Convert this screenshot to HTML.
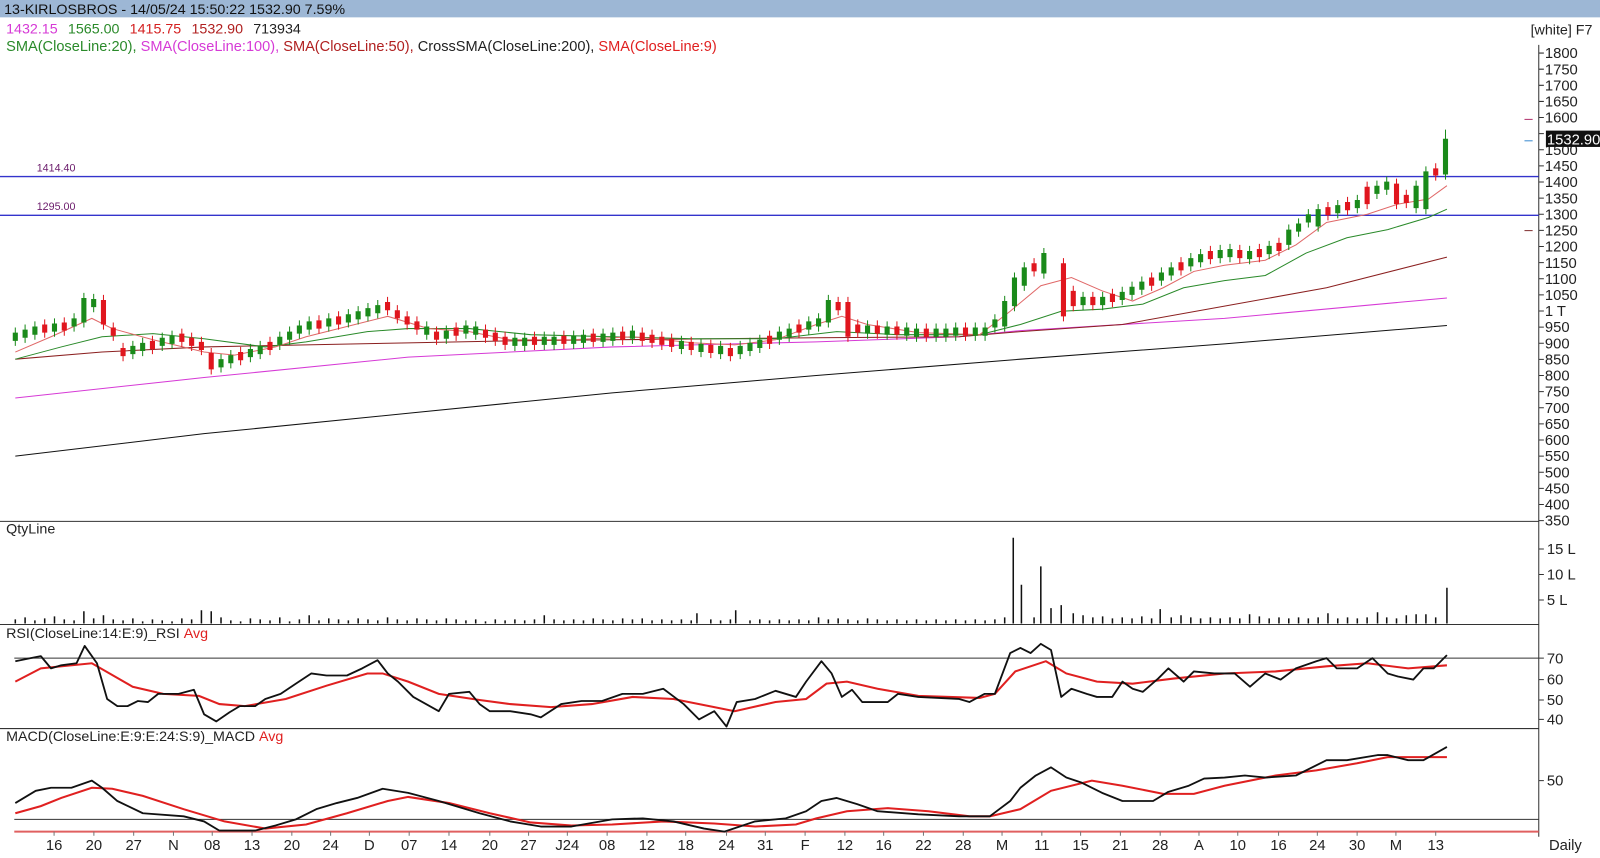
<!DOCTYPE html>
<html><head><meta charset="utf-8"><style>
html,body{margin:0;padding:0;background:#fff;width:1600px;height:858px;overflow:hidden}
svg{display:block;font-family:"Liberation Sans",Tahoma,sans-serif}
</style></head><body>
<svg width="1600" height="858" viewBox="0 0 1600 858" xmlns="http://www.w3.org/2000/svg">
<g transform="scale(1.0204)">
<rect x="0" y="0" width="1600" height="17" fill="#9db7d5"/>
<text x="4" y="13.5" font-size="14" fill="#111">13-KIRLOSBROS - 14/05/24 15:50:22 1532.90 7.59%</text>
<text x="6" y="33" font-size="14"><tspan fill="#d63ad6">1432.15</tspan><tspan fill="#2a8a2a" dx="10">1565.00</tspan><tspan fill="#d42020" dx="10">1415.75</tspan><tspan fill="#b02020" dx="10">1532.90</tspan><tspan fill="#222" dx="10">713934</tspan></text>
<text x="6" y="50" font-size="14.3"><tspan fill="#2a8a2a">SMA(CloseLine:20), </tspan><tspan fill="#d63ad6">SMA(CloseLine:100), </tspan><tspan fill="#b02020">SMA(CloseLine:50), </tspan><tspan fill="#222">CrossSMA(CloseLine:200), </tspan><tspan fill="#e02020">SMA(CloseLine:9)</tspan></text>
<text x="1500" y="34" font-size="14" fill="#222">[white] F7</text>

<line x1="1508" y1="44" x2="1508" y2="820" stroke="#333"/>
<g stroke="#333">
<path d="M1508,52h5M1508,67.8h5M1508,83.6h5M1508,99.4h5M1508,115.2h5M1508,131h5M1508,146.8h5M1508,162.6h5M1508,178.4h5M1508,194.2h5M1508,210h5M1508,225.8h5M1508,241.6h5M1508,257.4h5M1508,273.2h5M1508,289h5M1508,304.8h5M1508,320.6h5M1508,336.4h5M1508,352.2h5M1508,368h5M1508,383.8h5M1508,399.6h5M1508,415.4h5M1508,431.2h5M1508,447h5M1508,462.8h5M1508,478.6h5M1508,494.4h5M1508,510.2h5"/>
</g>
<g font-size="14.5" fill="#222">
<text x="1514" y="57">1800</text><text x="1514" y="72.8">1750</text><text x="1514" y="88.6">1700</text><text x="1514" y="104.4">1650</text><text x="1514" y="120.2">1600</text><text x="1514" y="151.8">1500</text><text x="1514" y="167.6">1450</text><text x="1514" y="183.4">1400</text><text x="1514" y="199.2">1350</text><text x="1514" y="215">1300</text><text x="1514" y="230.8">1250</text><text x="1514" y="246.6">1200</text><text x="1514" y="262.4">1150</text><text x="1514" y="278.2">1100</text><text x="1514" y="294">1050</text><text x="1514" y="309.8">1 T</text><text x="1514" y="325.6">950</text><text x="1514" y="341.4">900</text><text x="1514" y="357.2">850</text><text x="1514" y="373">800</text><text x="1514" y="388.8">750</text><text x="1514" y="404.6">700</text><text x="1514" y="420.4">650</text><text x="1514" y="436.2">600</text><text x="1514" y="452">550</text><text x="1514" y="467.8">500</text><text x="1514" y="483.6">450</text><text x="1514" y="499.4">400</text><text x="1514" y="515.2">350</text>
</g>
<rect x="1515" y="128" width="85" height="16" fill="#111"/>
<text x="1516" y="141.5" font-size="14.5" fill="#fff">1532.90</text>
<line x1="1494" y1="117" x2="1502" y2="117" stroke="#b0306a"/>
<line x1="1494" y1="138" x2="1502" y2="138" stroke="#3a8ad0"/>
<line x1="1494" y1="226" x2="1502" y2="226" stroke="#803030"/>

<g stroke="#333">
<line x1="0" y1="511" x2="1508" y2="511"/>
<line x1="0" y1="612" x2="1508" y2="612"/>
<line x1="0" y1="714" x2="1508" y2="714"/>
<line x1="14" y1="645" x2="1508" y2="645"/>
<line x1="14" y1="803" x2="1508" y2="803"/>
<path d="M1508,538h5M1508,563h5M1508,588h5M1508,645h5M1508,666h5M1508,686h5M1508,705h5M1508,765h5"/>
</g>
<line x1="14" y1="815" x2="1508" y2="815" stroke="#e06060" stroke-width="2"/>
<g font-size="14" fill="#222">
<text x="6" y="523">QtyLine</text>
<text x="6" y="625">RSI(CloseLine:14:E:9)_RSI <tspan fill="#e02020">Avg</tspan></text>
<text x="6" y="726">MACD(CloseLine:E:9:E:24:S:9)_MACD <tspan fill="#e02020">Avg</tspan></text>
</g>
<g font-size="14.5" fill="#222">
<text x="1516" y="543">15 L</text><text x="1516" y="568">10 L</text><text x="1516" y="593">5 L</text>
<text x="1516" y="650">70</text><text x="1516" y="671">60</text><text x="1516" y="691">50</text><text x="1516" y="710">40</text>
<text x="1516" y="770">50</text>
</g>

<line x1="0" y1="173" x2="1508" y2="173" stroke="#3333cc" stroke-width="1.3"/>
<line x1="0" y1="211" x2="1508" y2="211" stroke="#3333cc" stroke-width="1.3"/>
<text x="36" y="168" font-size="10.5" fill="#6a1a6a">1414.40</text>
<text x="36" y="206" font-size="10.5" fill="#6a1a6a">1295.00</text>

<polyline fill="none" stroke="#111" points="15,447 200,425 400,405 600,385 800,368 1000,352 1200,337 1418,319"/>
<polyline fill="none" stroke="#d63ad6" points="15,390 200,370 400,350 600,340 800,335 940,330 1000,324 1200,312 1418,292"/>
<polyline fill="none" stroke="#8b2020" points="15,352 100,345 200,340 300,338 400,336 500,334 600,333 700,332 800,331 940,330 1000,325 1100,318 1200,300 1300,282 1418,252"/>
<polyline fill="none" stroke="#2a8a2a" points="15,352 60,340 100,330 150,327 200,332 260,340 300,335 360,325 400,322 460,322 520,328 600,330 680,332 760,332 820,325 880,328 960,328 1000,318 1040,305 1080,303 1120,298 1160,282 1200,275 1240,270 1280,248 1320,233 1360,225 1400,213 1418,205"/>
<polyline fill="none" stroke="#e06868" points="15,345 50,330 90,312 110,322 150,333 200,345 230,348 270,340 300,330 340,320 380,310 420,322 460,325 500,333 560,333 620,330 680,336 720,338 760,333 800,318 825,310 850,318 900,326 960,328 990,305 1020,280 1050,272 1080,285 1110,295 1140,282 1170,266 1200,260 1240,255 1270,240 1300,218 1340,210 1370,200 1400,195 1418,182"/>

<defs>
<path id="gc" d="M15,326V334M24.6,323V331M34.2,320V328M53.4,317V325M72.6,312V320M82.2,292V316M91.8,293V301M130.2,339V347M139.8,336V344M159,331V339M168.6,329V337M216.6,352V360M226.2,348V356M245.4,342V350M255,339V347M274.2,330V338M283.8,325V333M293.4,319V327M303,315V323M322.2,312V320M341.4,308V316M351,305V313M360.6,302V310M370.2,299V307M418.2,320V328M437.4,324V332M456.6,319V327M466.2,320V328M504.6,331V339M514.2,331V339M533.4,330V338M543,330V338M562.2,329V337M571.8,328V336M591,327V335M600.6,326V334M619.8,324V332M667.8,334V342M687,337V345M706.2,339V347M725.4,339V347M735,336V344M744.6,333V341M763.8,325V333M773.4,322V330M792.6,315V323M802.2,312V320M811.8,294V316M850.2,319V327M869.4,320V328M888.6,321V329M898.2,322V330M917.4,322V330M927,322V330M936.6,321V329M955.8,321V329M965.4,321V329M975,313V321M984.6,295V320M994.2,272V300M1003.8,262V280M1023,248V268M1061.4,291V299M1080.6,291V299M1099.8,286V294M1109.4,281V289M1119,276V284M1138.2,267V275M1147.8,262V270M1167,253V261M1176.6,249V257M1195.8,245V253M1205.4,244V252M1224.6,246V254M1243.8,241V249M1263,225V240M1272.6,219V227M1282.2,210V218M1291.8,205V222M1311,201V209M1330.2,196V204M1349.4,182V190M1359,178V186M1387.8,182V204M1397.4,168V205M1416.6,136V171"/>
<path id="rc" d="M43.8,318V326M63,316V324M101.4,294V318M111,321V329M120.6,341V349M149.4,334V342M178.2,327V335M187.8,331V339M197.4,335V343M207,346V362M235.8,345V353M264.6,335V343M312.6,314V322M331.8,310V318M379.8,296V304M389.4,304V312M399,310V318M408.6,315V323M427.8,325V333M447,321V329M475.8,323V331M485.4,326V334M495,330V338M523.8,330V338M552.6,329V337M581.4,327V335M610.2,325V333M629.4,326V334M639,328V336M648.6,330V338M658.2,332V340M677.4,335V343M696.6,338V346M715.8,341V349M754.2,329V337M783,318V326M821.4,296V304M831,296V330M840.6,318V326M859.8,319V327M879,320V328M907.8,322V330M946.2,321V329M1013.4,258V266M1042.2,258V310M1051.8,285V300M1071,291V299M1090.2,288V296M1128.6,272V280M1157.4,257V265M1186.2,246V254M1215,245V253M1234.2,244V252M1253.4,238V246M1301.4,203V211M1320.6,198V206M1339.8,183V200M1368.6,180V200M1378.2,191V199M1407,165V172"/>
</defs>
<g stroke="#1a8a1a" fill="none">
<use href="#gc" stroke-width="1" transform="translate(0,-5)"/>
<use href="#gc" stroke-width="1" transform="translate(0,5)"/>
<use href="#gc" stroke-width="5"/>
</g>
<g stroke="#e0161e" fill="none">
<use href="#rc" stroke-width="1" transform="translate(0,-5)"/>
<use href="#rc" stroke-width="1" transform="translate(0,5)"/>
<use href="#rc" stroke-width="5"/>
</g>
<line x1="1416.6" y1="127" x2="1416.6" y2="173" stroke="#1a8a1a"/>

<path fill="none" stroke="#111" stroke-width="1.5" d="M15,611v-4M24.6,611v-6M34.2,611v-3M43.8,611v-5M53.4,611v-7M63,611v-4M72.6,611v-3M82.2,611v-12M91.8,611v-5M101.4,611v-8M111,611v-4M120.6,611v-3M130.2,611v-5M139.8,611v-2M149.4,611v-4M159,611v-3M168.6,611v-2M178.2,611v-5M187.8,611v-4M197.4,611v-13M207,611v-12M216.6,611v-6M226.2,611v-3M235.8,611v-2M245.4,611v-5M255,611v-4M264.6,611v-3M274.2,611v-6M283.8,611v-2M293.4,611v-4M303,611v-8M312.6,611v-3M322.2,611v-5M331.8,611v-4M341.4,611v-3M351,611v-5M360.6,611v-4M370.2,611v-3M379.8,611v-6M389.4,611v-4M399,611v-3M408.6,611v-5M418.2,611v-4M427.8,611v-3M437.4,611v-5M447,611v-4M456.6,611v-3M466.2,611v-4M475.8,611v-2M485.4,611v-4M495,611v-3M504.6,611v-4M514.2,611v-3M523.8,611v-4M533.4,611v-8M543,611v-4M552.6,611v-3M562.2,611v-4M571.8,611v-3M581.4,611v-5M591,611v-4M600.6,611v-3M610.2,611v-5M619.8,611v-4M629.4,611v-5M639,611v-3M648.6,611v-4M658.2,611v-3M667.8,611v-4M677.4,611v-3M683,611v-10M696.6,611v-4M706.2,611v-3M715.8,611v-4M721,611v-13M735,611v-3M744.6,611v-4M754.2,611v-3M763.8,611v-4M773.4,611v-3M783,611v-4M792.6,611v-3M802.2,611v-6M811.8,611v-4M821.4,611v-5M831,611v-4M840.6,611v-3M850.2,611v-5M859.8,611v-4M869.4,611v-3M879,611v-4M888.6,611v-3M898.2,611v-4M907.8,611v-3M917.4,611v-4M927,611v-3M936.6,611v-4M946.2,611v-3M955.8,611v-4M965.4,611v-3M975,611v-4M984.6,611v-6M993,611v-84M1001,611v-38M1013.4,611v-6M1020,611v-56M1030,611v-15M1040,611v-18M1051.8,611v-10M1061.4,611v-8M1071,611v-6M1080.6,611v-7M1090.2,611v-5M1099.8,611v-6M1109.4,611v-5M1119,611v-7M1128.6,611v-5M1137,611v-14M1147.8,611v-6M1157.4,611v-8M1167,611v-6M1176.6,611v-5M1186.2,611v-6M1195.8,611v-5M1205.4,611v-6M1215,611v-5M1224.6,611v-9M1234.2,611v-7M1243.8,611v-5M1253.4,611v-6M1263,611v-5M1272.6,611v-6M1282.2,611v-5M1291.8,611v-6M1301.4,611v-10M1311,611v-5M1320.6,611v-6M1330.2,611v-5M1339.8,611v-6M1350,611v-11M1359,611v-6M1368.6,611v-5M1378.2,611v-8M1387.8,611v-9M1397.4,611v-9M1407,611v-6M1418,611v-35"/>

<polyline fill="none" stroke="#e02020" stroke-width="2" points="15,668 40,655 90,650 130,673 160,680 195,682 215,690 240,692 280,685 320,672 360,660 375,660 400,668 430,680 470,686 500,690 540,693 580,690 620,683 660,685 700,693 720,697 760,688 790,685 810,670 830,668 860,675 900,682 960,684 975,680 995,658 1025,648 1045,660 1075,668 1110,670 1150,665 1200,660 1250,658 1300,653 1340,650 1380,655 1418,652"/>
<polyline fill="none" stroke="#111" stroke-width="1.8" stroke-linejoin="round" points="15,648 30,645 40,643 50,655 60,652 75,650 83,633 95,650 105,685 115,692 125,692 135,687 145,688 155,680 175,680 190,676 200,700 212,707 225,698 235,692 250,692 260,685 275,680 290,670 305,660 320,662 340,662 355,655 370,647 380,660 390,668 405,683 430,697 440,680 460,678 470,690 480,697 500,697 520,700 530,703 550,690 570,687 590,687 610,680 630,680 650,675 670,690 685,705 700,697 712,712 722,688 740,685 760,677 780,683 790,668 805,648 815,660 825,683 835,676 845,688 870,688 880,680 900,683 940,685 950,688 965,680 975,680 990,640 1000,635 1010,640 1020,631 1030,637 1040,683 1050,675 1065,680 1075,683 1090,683 1100,668 1110,675 1120,678 1135,665 1145,655 1160,668 1170,658 1190,660 1210,660 1225,673 1240,660 1255,666 1270,655 1290,648 1300,645 1310,655 1330,655 1345,645 1360,660 1370,663 1385,666 1395,655 1405,655 1418,642"/>

<polyline fill="none" stroke="#e02020" stroke-width="2" points="15,797 40,790 60,782 90,772 110,773 140,780 180,793 220,805 260,812 300,808 340,797 380,785 400,781 440,787 480,797 520,806 560,809 600,808 650,805 700,807 740,810 780,808 800,802 830,795 870,792 910,795 950,800 970,800 1000,793 1030,775 1070,765 1100,770 1140,778 1170,778 1200,770 1250,760 1290,755 1330,748 1360,742 1400,742 1418,742"/>
<polyline fill="none" stroke="#111" stroke-width="1.8" stroke-linejoin="round" points="15,787 35,775 50,772 70,772 90,765 100,772 115,785 140,797 180,800 200,805 215,814 250,814 270,809 290,803 310,793 330,787 350,782 375,773 400,777 430,785 470,797 500,805 530,810 560,810 600,803 630,802 660,805 690,812 710,815 740,805 770,802 790,795 805,785 820,782 840,788 860,795 900,798 940,800 970,800 990,785 1000,772 1015,760 1030,752 1045,762 1060,767 1080,777 1100,785 1130,785 1145,776 1165,770 1180,763 1200,762 1220,760 1240,762 1270,760 1300,745 1320,745 1350,740 1360,740 1380,745 1395,745 1418,732"/>

<path stroke="#777" d="M53,815v4M92,815v4M131,815v4M170,815v4M208,815v4M247,815v4M286,815v4M324,815v4M362,815v4M401,815v4M440,815v4M480,815v4M518,815v4M556,815v4M595,815v4M634,815v4M672,815v4M712,815v4M750,815v4M789,815v4M828,815v4M866,815v4M905,815v4M944,815v4M982,815v4M1021,815v4M1059,815v4M1098,815v4M1137,815v4M1175,815v4M1213,815v4M1253,815v4M1291,815v4M1330,815v4M1368,815v4M1407,815v4"/>
<g font-size="14.5" fill="#222" text-anchor="middle">
<text x="53" y="833">16</text><text x="92" y="833">20</text><text x="131" y="833">27</text><text x="170" y="833">N</text><text x="208" y="833">08</text><text x="247" y="833">13</text><text x="286" y="833">20</text><text x="324" y="833">24</text><text x="362" y="833">D</text><text x="401" y="833">07</text><text x="440" y="833">14</text><text x="480" y="833">20</text><text x="518" y="833">27</text><text x="556" y="833">J24</text><text x="595" y="833">08</text><text x="634" y="833">12</text><text x="672" y="833">18</text><text x="712" y="833">24</text><text x="750" y="833">31</text><text x="789" y="833">F</text><text x="828" y="833">12</text><text x="866" y="833">16</text><text x="905" y="833">22</text><text x="944" y="833">28</text><text x="982" y="833">M</text><text x="1021" y="833">11</text><text x="1059" y="833">15</text><text x="1098" y="833">21</text><text x="1137" y="833">28</text><text x="1175" y="833">A</text><text x="1213" y="833">10</text><text x="1253" y="833">16</text><text x="1291" y="833">24</text><text x="1330" y="833">30</text><text x="1368" y="833">M</text><text x="1407" y="833">13</text>
</g>
<text x="1518" y="833" font-size="14.5" fill="#222">Daily</text>
</g>
</svg>
</body></html>
